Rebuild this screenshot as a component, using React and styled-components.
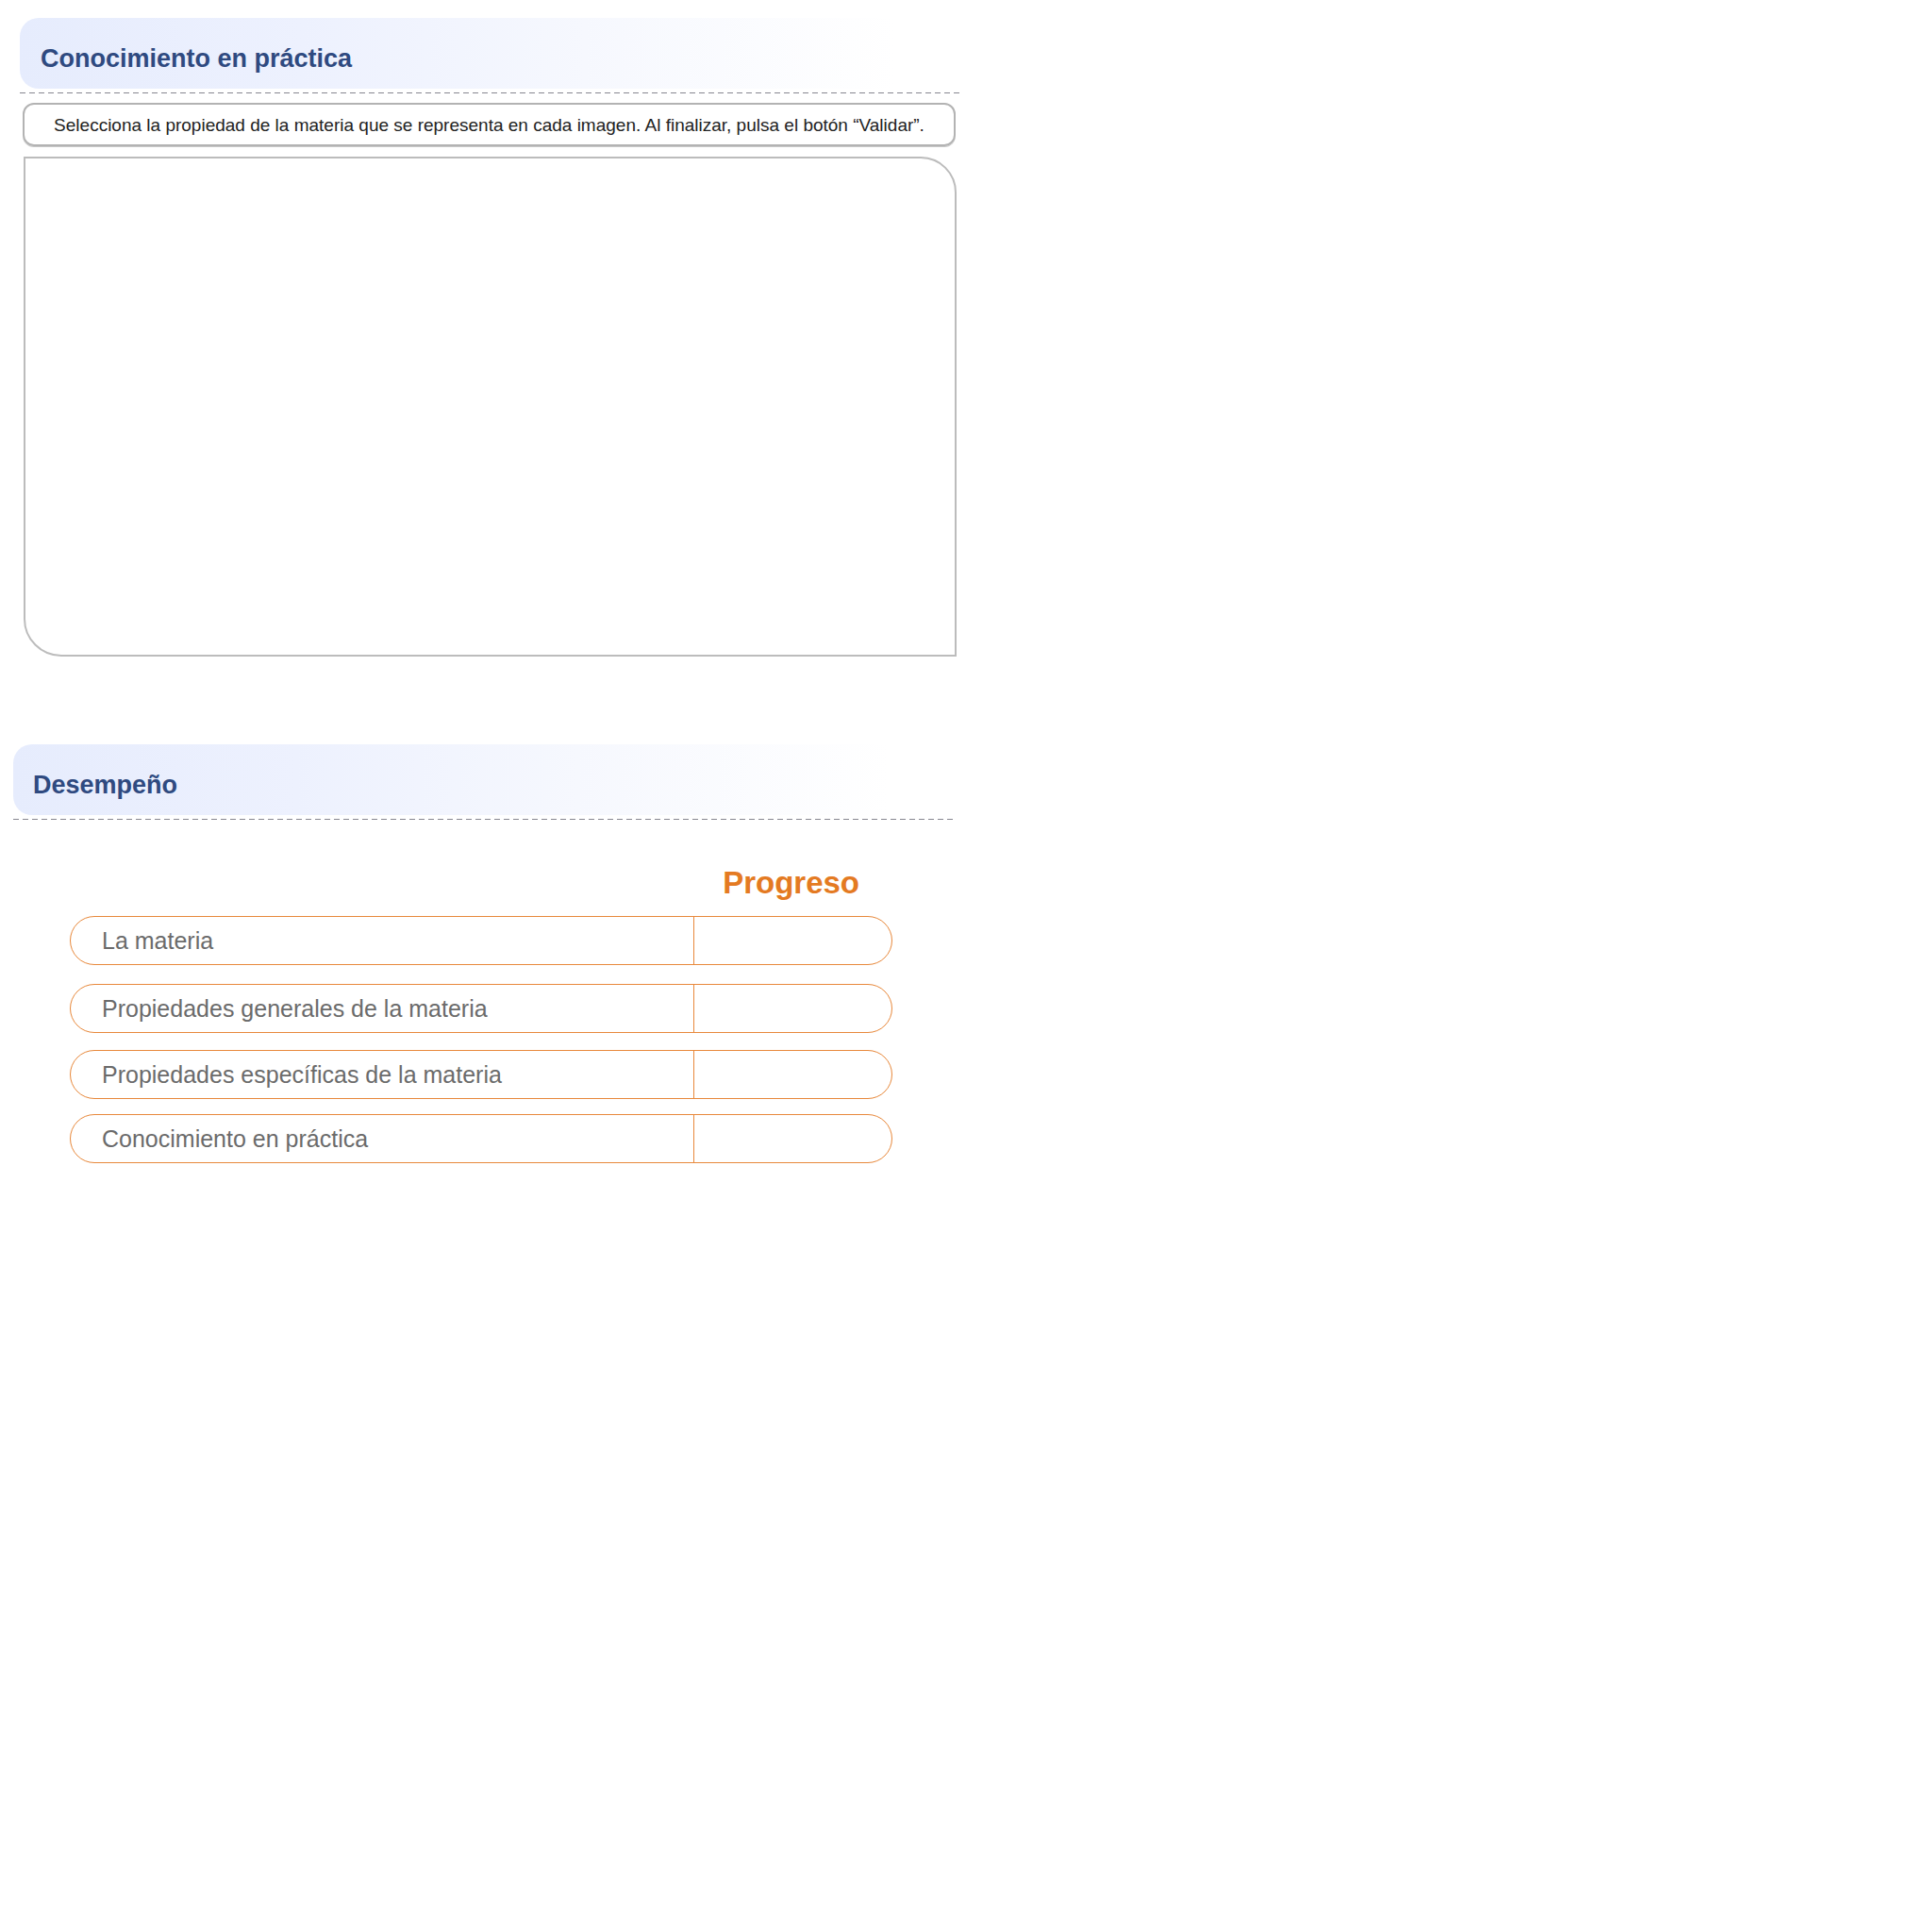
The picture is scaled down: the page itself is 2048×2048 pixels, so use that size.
import React from "react";
import styled, { createGlobalStyle } from "styled-components";

const GlobalStyle = createGlobalStyle`
  html, body {
    margin: 0;
    padding: 0;
    background: #ffffff;
  }
  body {
    font-family: "Liberation Sans", Arial, sans-serif;
  }
`;

const Page = styled.div`
  padding-top: 19px;
  width: 2048px;
  min-height: 2048px;
  box-sizing: border-box;
`;

const Section = styled.section`
  margin-left: ${(p) => p.$left}px;
  width: ${(p) => p.$width}px;
  margin-top: ${(p) => p.$top || 0}px;
  display: flex;
  flex-direction: column;
`;

const SectionHeader = styled.div`
  height: 75px;
  box-sizing: border-box;
  padding: 30px 0 0 ${(p) => p.$indent || 22}px;
  border-radius: 20px 0 0 20px;
  background: linear-gradient(
    90deg,
    #e6ecfd 0%,
    #edf1fe 30%,
    #f6f8fe 60%,
    #ffffff 93%
  );
`;

const SectionTitle = styled.h2`
  margin: 0;
  font-size: 27px;
  line-height: 27px;
  font-weight: 700;
  color: #2f4a80;
`;

const DashedRule = styled.div`
  height: 1px;
  margin-top: 4px;
  background: repeating-linear-gradient(
    90deg,
    #868690 0 6px,
    transparent 6px 10px
  );
`;

const Instruction = styled.div`
  margin: 10px 0 0 3px;
  width: 989px;
  height: 46px;
  box-sizing: border-box;
  border: 2px solid #b3b3b3;
  border-radius: 12px;
  box-shadow: 0 1px 0 #c8c8c8;
  display: flex;
  align-items: center;
  justify-content: center;
  font-size: 19px;
  line-height: 19px;
  color: #222222;
`;

const Stage = styled.div`
  margin: 11px 0 0 4px;
  width: 989px;
  height: 530px;
  box-sizing: border-box;
  border: 2px solid #bcbcbc;
  border-radius: 0 38px 0 40px;
  background: #ffffff;
`;

const ProgressBlock = styled.div`
  margin: 47px 0 0 60px;
  width: 872px;
  display: flex;
  flex-direction: column;
`;

const ProgressHeading = styled.div`
  align-self: flex-end;
  margin-right: 35px;
  font-size: 33px;
  line-height: 40px;
  font-weight: 700;
  color: #e47a22;
`;

const Rows = styled.div`
  margin-top: 15px;
  display: flex;
  flex-direction: column;
`;

const Row = styled.div`
  height: 52px;
  margin-top: ${(p) => p.$space}px;
  box-sizing: border-box;
  border: 1.5px solid #e8893c;
  border-radius: 26px;
  display: grid;
  grid-template-columns: 661px 1fr;
  overflow: hidden;
`;

const RowLabel = styled.div`
  display: flex;
  align-items: center;
  padding-left: 33px;
  font-size: 25px;
  line-height: 25px;
  color: #6b6b6b;
  border-right: 1.5px solid #e8893c;
`;

const RowValue = styled.div``;

const topics = [
  { label: "La materia", space: 0 },
  { label: "Propiedades generales de la materia", space: 20 },
  { label: "Propiedades específicas de la materia", space: 18 },
  { label: "Conocimiento en práctica", space: 16 },
];

export default function App() {
  return (
    <>
      <GlobalStyle />
      <Page>
        <Section $left={21} $width={997}>
          <SectionHeader>
            <SectionTitle>Conocimiento en práctica</SectionTitle>
          </SectionHeader>
          <DashedRule />
          <Instruction>
            Selecciona la propiedad de la materia que se representa en cada imagen. Al finalizar, pulsa el botón “Validar”.
          </Instruction>
          <Stage />
        </Section>

        <Section $left={14} $width={998} $top={93}>
          <SectionHeader $indent={21}>
            <SectionTitle>Desempeño</SectionTitle>
          </SectionHeader>
          <DashedRule />
          <ProgressBlock>
            <ProgressHeading>Progreso</ProgressHeading>
            <Rows>
              {topics.map((t) => (
                <Row key={t.label} $space={t.space}>
                  <RowLabel>{t.label}</RowLabel>
                  <RowValue />
                </Row>
              ))}
            </Rows>
          </ProgressBlock>
        </Section>
      </Page>
    </>
  );
}
